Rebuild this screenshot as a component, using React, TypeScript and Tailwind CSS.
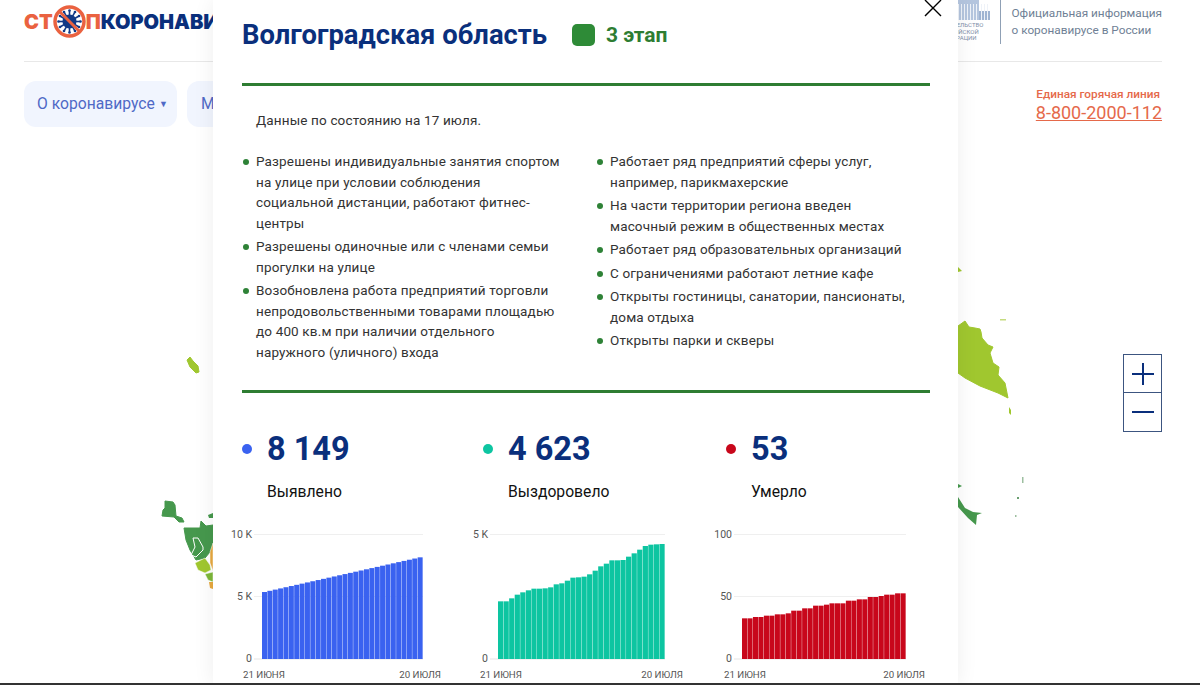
const font = { fontFamily: "Roboto, 'Liberation Sans', sans-serif" };

const leftList = [
  ["Разрешены индивидуальные занятия спортом", "на улице при условии соблюдения", "социальной дистанции, работают фитнес-", "центры"],
  ["Разрешены одиночные или с членами семьи", "прогулки на улице"],
  ["Возобновлена работа предприятий торговли", "непродовольственными товарами площадью", "до 400 кв.м при наличии отдельного", "наружного (уличного) входа"],
];
const rightList = [
  ["Работает ряд предприятий сферы услуг,", "например, парикмахерские"],
  ["На части территории региона введен", "масочный режим в общественных местах"],
  ["Работает ряд образовательных организаций"],
  ["С ограничениями работают летние кафе"],
  ["Открыты гостиницы, санатории, пансионаты,", "дома отдыха"],
  ["Открыты парки и скверы"],
];

const blueTops = Array.from({ length: 30 }, (_, i) => 246 - (i * 104) / 29);
const tealTops = [274, 274, 265, 254, 247, 241, 236, 236, 235, 232, 223, 220, 212, 203, 202, 200, 193, 182, 169, 161, 151, 151, 150, 140, 130, 119, 108, 104, 103, 102];
const redTops = [325, 325, 321, 321, 317, 317, 313, 313, 310, 302, 302, 295, 295, 287, 287, 284, 280, 280, 280, 272, 272, 268, 268, 261, 261, 258, 254, 254, 250, 250];

type ChartProps = {
  tops: number[];
  color: string;
  barStart: number;
  barEnd: number;
  gridStart: number;
  labelEnd: number;
  dateStart: number;
  dateEnd: number;
  ticks: [string, string, string];
};

function Chart({ tops, color, barStart, barEnd, gridStart, labelEnd, dateStart, dateEnd, ticks }: ChartProps) {
  const w = (barEnd - barStart) / tops.length;
  return (
    <svg width="230" height="160" className="mt-[23px] overflow-visible" style={font}>
      <line x1={gridStart} x2={barEnd} y1="9.5" y2="9.5" stroke="#efefef" />
      {ticks[1] && <line x1={gridStart} x2={barEnd} y1="71.5" y2="71.5" stroke="#efefef" />}
      <line x1={gridStart} x2={barEnd} y1="134" y2="134" stroke="#e5e5e5" />
      {tops.map((t, i) => {
        const y = t / 3 - 15;
        return <rect key={i} x={barStart + i * w} y={y} width={w - 0.35} height={134 - y} fill={color} />;
      })}
      <g fill="#555">
        <g fontSize="10.5">
          <text x={labelEnd} y="13" textAnchor="end">{ticks[0]}</text>
          {ticks[1] && <text x={labelEnd} y="75" textAnchor="end">{ticks[1]}</text>}
          <text x={labelEnd} y="137" textAnchor="end">{ticks[2]}</text>
        </g>
        <g fontSize="9.7">
          <text x={dateStart} y="153">21 ИЮНЯ</text>
          <text x={dateEnd} y="153" textAnchor="end">20 ИЮЛЯ</text>
        </g>
      </g>
    </svg>
  );
}

function BulletList({ items }: { items: string[][] }) {
  return (
    <ul className="flex flex-col gap-[3px]">
      {items.map((lines) => (
        <li key={lines[0]} className="relative pl-[14px]">
          <span className="absolute left-[1px] top-[8px] h-[6px] w-[6px] rounded-full bg-[#2e8237]" />
          {lines.map((l) => (
            <div key={l} className="h-[20.5px] whitespace-nowrap leading-[20.5px]">{l}</div>
          ))}
        </li>
      ))}
    </ul>
  );
}

function Stat({ width, dot, value, label, children }: { width: string; dot: string; value: string; label: string; children: React.ReactNode }) {
  return (
    <div className={width}>
      <div className="flex h-[36px] items-center gap-[15px]">
        <span className={`h-[10px] w-[10px] rounded-full ${dot}`} />
        <span className="text-[32.5px] font-bold leading-none text-[#0a2f7c]">{value}</span>
      </div>
      <div className="mt-[15px] pl-[25px] text-[15.7px] leading-[20px] text-[#111]">{label}</div>
      {children}
    </div>
  );
}

function Virus() {
  const spikes = Array.from({ length: 12 }, (_, i) => (i * Math.PI) / 6);
  return (
    <svg width="33" height="33" viewBox="0 0 33 33" className="shrink-0">
      <circle cx="16.5" cy="16.5" r="14.5" fill="#fff" stroke="#ea6240" strokeWidth="3.5" />
      <circle cx="16.5" cy="16.5" r="7" fill="#123a86" />
      {spikes.map((a) => (
        <g key={a}>
          <line x1={16.5 + 6 * Math.cos(a)} y1={16.5 + 6 * Math.sin(a)} x2={16.5 + 11 * Math.cos(a)} y2={16.5 + 11 * Math.sin(a)} stroke="#123a86" strokeWidth="1.6" />
          <circle cx={16.5 + 11 * Math.cos(a)} cy={16.5 + 11 * Math.sin(a)} r="1.3" fill="#123a86" />
        </g>
      ))}
      <line x1="6.5" y1="6.5" x2="26.5" y2="26.5" stroke="#ea6240" strokeWidth="3" />
    </svg>
  );
}

function MapFragments() {
  return (
    <svg width="1200" height="685" className="absolute left-0 top-0" strokeLinejoin="round">
      <polygon fill="#a0c72f" stroke="#a0c72f" strokeWidth="1" points="187,360 190,357 193,361 198,366 199,372 196,373 190,367" />
      <polygon fill="#46984d" stroke="#46984d" strokeWidth="1" points="165,501 173,502 175,505 176,516 182,518 184,522 179,522 174,517 162,516 163,510 165,508" />
      <polygon fill="#46984d" stroke="#46984d" strokeWidth="1" points="184,528 200,528 201,521 206,526 213,525 213,543 210,552 205,558 196,560 190,550 186,540" />
      <polygon fill="#46984d" points="208,515 213,513 213,518 209,518" />
      <polygon fill="none" stroke="#fff" strokeWidth="1" points="193,538 198,538 203,547 203,550 196,557 191,555 195,547" />
      <polygon fill="#e8a93f" stroke="#fff" strokeWidth="0.5" points="210,552 213,543 213,571 210,563" />
      <polygon fill="#a0c72f" stroke="#fff" strokeWidth="0.5" points="195,563 205,558 210,565 211,570 205,573 198,570" />
      <polygon fill="#7db83a" stroke="#fff" strokeWidth="0.5" points="205,574 213,572 213,582 208,580" />
      <polygon fill="#e8a93f" points="209,582 213,582 213,589 210,588" />
      <polygon fill="#a0c72f" stroke="#a0c72f" strokeWidth="1" points="958,326 965,321 969,327 975,328 980,329 981,332 982,338 988,345 993,347 990,353 993,363 999,367 998,375 1005,383 1008,398 998,393 980,386 965,378 958,373" />
      <polygon fill="#a0c72f" points="958,267 962,271 958,272" />
      <rect x="1000" y="319" width="6" height="1.5" fill="#c5db7f" />
      <polygon fill="#a0c72f" points="1009,407 1011,410 1011,415 1009,413" />
      <polygon fill="#46984d" points="958,497 965,508 973,512 982,513 977,515 976,525 968,518 958,507" />
      <polygon fill="#46984d" points="958,484 962,486 958,488" />
      <rect x="1022" y="477" width="1.5" height="6" fill="#9dbfa0" />
      <rect x="1017" y="497" width="2" height="2" fill="#6a9f70" />
      <rect x="1015" y="515" width="1.5" height="2" fill="#9dbfa0" />
    </svg>
  );
}

export default function App() {
  return (
    <div className="relative h-[685px] w-[1200px] overflow-hidden bg-white" style={font}>
      <MapFragments />

      <div className="relative pl-6 pr-[38px]">
        <header className="flex h-[62px] items-start justify-between border-b border-[#e8e8e8]">
          <div className="mt-[5px] flex items-center whitespace-nowrap text-[20px] font-black leading-none" style={{ fontFamily: "Inter, sans-serif" }}>
            <span className="text-[#ea6240]">СТ</span>
            <Virus />
            <span className="text-[#ea6240]">П</span>
            <span className="text-[#0a2f7c]">КОРОНАВИРУС</span>
          </div>
          <div className="flex items-start">
            <div className="flex w-[66px] flex-col items-center">
              <svg width="66" height="20" viewBox="0 0 66 20">
                <rect x="10" y="0" width="44" height="20" fill="#b4c5de" />
                <rect x="54" y="11" width="11" height="9" fill="#9fb4d2" />
                {[12, 15, 18, 21, 24, 27, 30, 33, 36, 39, 42, 45, 48, 51, 56, 59, 62].map((x) => (
                  <rect key={x} x={x} y="4" width="1" height="16" fill="#eef2f8" />
                ))}
              </svg>
              <div className="mt-[2px] text-center text-[6px] leading-[6.5px] text-[#7f8fa9]">ПРАВИТЕЛЬСТВО<br />РОССИЙСКОЙ<br />ФЕДЕРАЦИИ</div>
            </div>
            <div className="ml-[9px] h-[44px] w-px bg-[#8fa0b5]" />
            <div className="ml-[10px] mt-[5px] whitespace-nowrap text-[11.8px] leading-[17px] text-[#6f7f95]">
              Официальная информация<br />о коронавирусе в России
            </div>
          </div>
        </header>

        <div className="mt-[19px] flex items-start justify-between">
          <nav className="flex gap-[10px] text-[15.7px] text-[#4f69c6]">
            <div className="flex h-[46px] w-[153px] items-center gap-[4px] rounded-xl bg-[#f1f5fe] pl-[13px]">
              О коронавирусе <span className="mt-[2px] text-[9px]">▼</span>
            </div>
            <div className="flex h-[46px] w-[120px] items-center rounded-xl bg-[#f1f5fe] pl-[14px]">Меры</div>
          </nav>
          <div className="mt-[6px] flex flex-col items-end text-[#e5694a]">
            <div className="pr-[2px] text-[11.8px] font-medium leading-[15px]">Единая горячая линия</div>
            <div className="text-[18px] leading-[21px] underline">8-800-2000-112</div>
          </div>
        </div>
      </div>

      <div className="absolute right-[38px] top-[354px] flex h-[78px] w-[39px] flex-col border border-[#3c5580] bg-white text-[#0a2f7c]">
        <div className="flex h-[38px] items-center justify-center border-b border-[#3c5580]">
          <svg width="22" height="22" viewBox="0 0 22 22"><path d="M0 11H22M11 0V22" stroke="currentColor" strokeWidth="2" /></svg>
        </div>
        <div className="flex flex-1 items-center justify-center">
          <svg width="22" height="2" viewBox="0 0 22 2"><path d="M0 1H22" stroke="currentColor" strokeWidth="2" /></svg>
        </div>
      </div>

      <div className="absolute left-[213px] top-0 h-[685px] w-[745px] overflow-hidden bg-white pl-[29px] pr-[28px] shadow-[0_0_20px_rgba(0,0,0,0.07)]">
        <svg width="20" height="20" viewBox="0 0 20 20" className="absolute left-[710px] top-[-2px]">
          <path d="M2 2L18 18M18 2L2 18" stroke="#000" strokeWidth="1.4" />
        </svg>

        <div className="flex h-[83px] items-start">
          <h1 className="mt-[17px] whitespace-nowrap text-[27.4px] font-bold leading-[36px] text-[#0a2f7c]">Волгоградская область</h1>
          <span className="ml-[25px] mt-[24px] h-[22px] w-[23px] rounded-[5px] bg-[#2e8b37]" />
          <span className="ml-[11px] mt-[22px] text-[21px] font-bold leading-[26px] text-[#2e7d32]">3 этап</span>
        </div>
        <div className="h-[3px] bg-[#2e7d32]" />

        <div className="pl-[14px] pt-[24px] text-[13.5px] leading-[21px] tracking-[0.15px] text-[#333]">
          <p>Данные по состоянию на 17 июля.</p>
        </div>
        <div className="mt-[20px] grid h-[242px] grid-cols-[354px_1fr] border-b-[3px] border-[#2e7d32] text-[13.5px] tracking-[0.15px] text-[#333]">
          <BulletList items={leftList} />
          <BulletList items={rightList} />
        </div>

        <div className="mt-[38px] flex">
          <Stat width="w-[241px] shrink-0" dot="bg-[#3a62f0]" value="8 149" label="Выявлено">
            <Chart tops={blueTops} color="#3a62f0" barStart={20} barEnd={181} gridStart={12} labelEnd={10} dateStart={1} dateEnd={199} ticks={["10 K", "5 K", "0"]} />
          </Stat>
          <Stat width="w-[243px] shrink-0" dot="bg-[#0dc5a1]" value="4 623" label="Выздоровело">
            <Chart tops={tealTops} color="#0dc5a1" barStart={15} barEnd={182} gridStart={7} labelEnd={5} dateStart={-3} dateEnd={200} ticks={["5 K", "", "0"]} />
          </Stat>
          <Stat width="w-[240px] shrink-0" dot="bg-[#c8071b]" value="53" label="Умерло">
            <Chart tops={redTops} color="#c8071b" barStart={16} barEnd={180} gridStart={8} labelEnd={6} dateStart={-2} dateEnd={199} ticks={["100", "50", "0"]} />
          </Stat>
        </div>
      </div>

      <div className="absolute bottom-0 left-0 h-[2px] w-full bg-[#333]" />
    </div>
  );
}
